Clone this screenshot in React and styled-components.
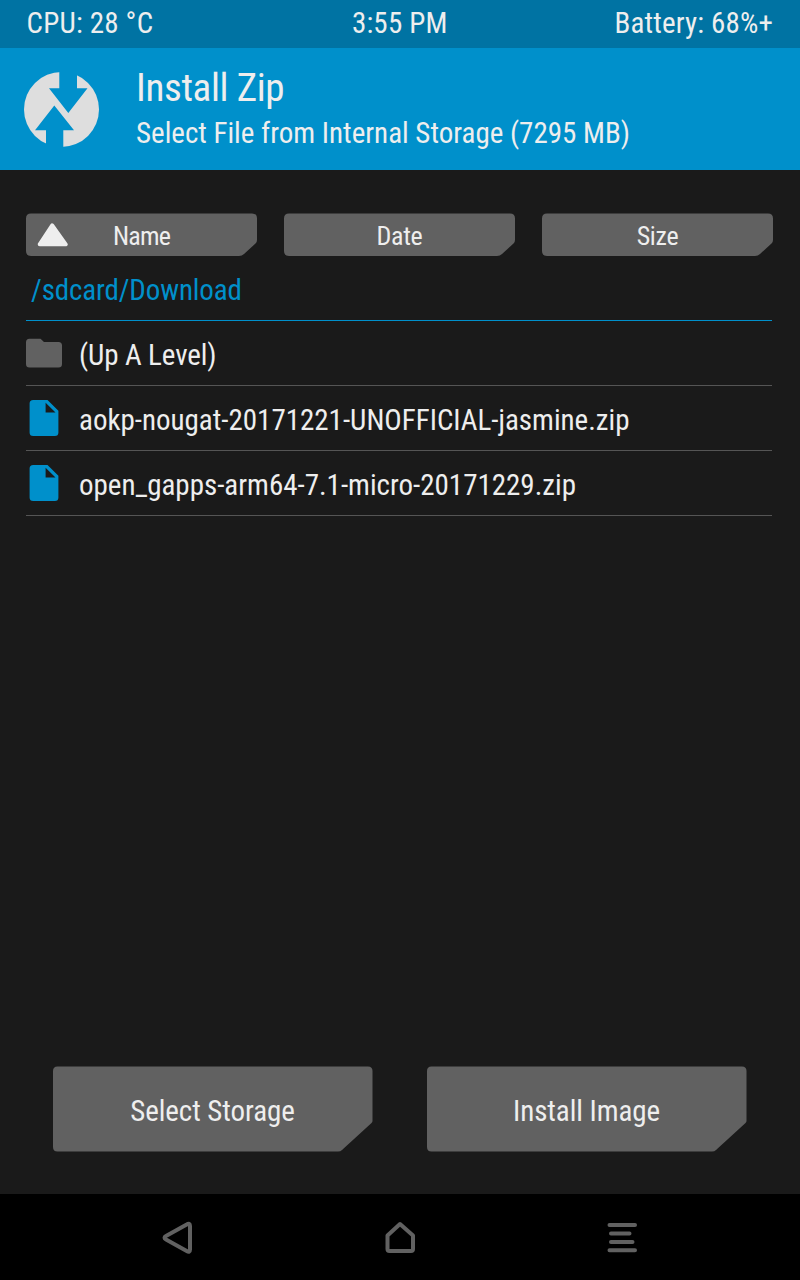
import React from "react";
import styled, { createGlobalStyle } from "styled-components";

const Global = createGlobalStyle`
  * { box-sizing: border-box; }
  body { margin: 0; background: #1a1a1a; }
`;

const Screen = styled.div`
  width: 800px;
  height: 1280px;
  display: flex;
  flex-direction: column;
  background: #1a1a1a;
  color: #eee;
  font-family: "Roboto Condensed", Roboto, sans-serif;
  font-stretch: 75%;
  font-weight: 400;
  font-size: 29px;
`;

const Label = styled.span`
  display: block;
  flex: none;
  white-space: nowrap;
  font-size: ${(p) => p.$size || 29}px;
  line-height: ${(p) => p.$line || 36}px;
  letter-spacing: ${(p) => p.$track || 0}px;
`;

const StatusBar = styled.header`
  height: 48px;
  padding: 5px 27px 0 26.5px;
  display: grid;
  grid-template-columns: 1fr auto 1fr;
  background: #0073a3;
`;

const StatusEnd = styled.div`
  display: flex;
  justify-content: flex-end;
`;

const TitleBar = styled.div`
  height: 122px;
  padding: 23px 24px 0;
  display: flex;
  gap: 36px;
  background: #0090cb;
`;

const TitleText = styled.div`
  display: flex;
  flex-direction: column;
  margin-top: -7px;
`;

const Content = styled.main`
  flex: 1;
  padding: 43px 27px 0 26px;
  display: flex;
  flex-direction: column;
`;

const SortRow = styled.div`
  display: flex;
  gap: 27px;
`;

const SortButton = styled.button`
  flex: none;
  width: 231px;
  height: 43px;
  padding: 3px 0 0;
  border: 0;
  display: grid;
  grid-template-columns: 54px 1fr 54px;
  justify-items: center;
  align-items: center;
  background: #616161;
  color: inherit;
  font: inherit;
  clip-path: path("M5 .5H226Q231 .5 231 5.5V27Q231 29 229.5 30.5L218 41Q216 43 213 43H5Q0 43 0 38V5.5Q0 .5 5 .5Z");
`;

const PathRow = styled.div`
  width: 746px;
  height: 65px;
  padding: 16px 0 0 5px;
  border-bottom: 1px solid #0090cb;
  color: #0090cb;
`;

const FileRow = styled.div`
  width: 746px;
  height: 65px;
  display: flex;
  align-items: center;
  gap: 17px;
  border-bottom: 1px solid #555;
  & > span { padding-top: 4px; }
`;

const Actions = styled.div`
  margin-top: auto;
  padding: 0 26px 42px 27px;
  display: flex;
  justify-content: space-between;
`;

const ActionButton = styled.button`
  width: 320px;
  height: 86px;
  padding: 4px 1px 0 0;
  border: 0;
  display: flex;
  justify-content: center;
  align-items: center;
  background: #616161;
  color: inherit;
  font: inherit;
  clip-path: path("M4.5 .5H315Q319.5 .5 319.5 5V55Q319.5 56 318.5 57L289 84Q287.500 85.500 285 85.500H4.500Q0 85.500 0 81V5Q0 .5 4.500 .5Z");
`;

const NavBar = styled.nav`
  height: 86px;
  padding: 26px 161px 0;
  display: flex;
  justify-content: space-between;
  background: #000;
`;

const NavIcon = styled.svg`
  width: 34px;
  height: 36px;
  fill: none;
  stroke: #616161;
  stroke-width: 4;
  stroke-linecap: round;
  stroke-linejoin: round;
`;

const Logo = () => (
  <svg width="76" height="78" viewBox="24 71 76 78">
    <mask id="arrows">
      <rect x="24" y="71" width="76" height="78" fill="#fff" />
      <path fill="#000" d="M59.300 70H77V88.300H87.500L68.300 113L49 88.300H59.300ZM54.300 105.500L74 130.300H63.300V150H46V130.300H35Z" />
    </mask>
    <circle cx="61.5" cy="109.400" r="37.5" fill="#dedede" mask="url(#arrows)" />
  </svg>
);

const FolderIcon = () => (
  <svg width="36" height="36" viewBox="0 0 36 36">
    <path fill="#616161" d="M3.500 3.700H14.500L18 7H32.500Q36 7 36 10.500V29Q36 32.500 32.500 32.500H3.500Q0 32.500 0 29V7.200Q0 3.700 3.500 3.700Z" />
  </svg>
);

const FileIcon = () => (
  <svg width="36" height="36" viewBox="0 0 36 36">
    <path fill="#0090cb" fillRule="evenodd" d="M7.200 0H21.500L32.400 10.800V32.500Q32.400 36 28.900 36H7.200Q3.600 36 3.600 32.500V3.500Q3.600 0 7.200 0ZM19.600 2.700V12.600H29.500Z" />
  </svg>
);

const SortArrow = () => (
  <svg width="32" height="26" viewBox="0 0 32 26">
    <path fill="#eee" stroke="#eee" strokeWidth="4" strokeLinejoin="round" d="M15.200 2.300L28.700 21.300H2.700Z" />
  </svg>
);

const files = [
  { name: "(Up A Level)", folder: true },
  { name: "aokp-nougat-20171221-UNOFFICIAL-jasmine.zip" },
  { name: "open_gapps-arm64-7.1-micro-20171229.zip" },
];

export default function App() {
  return (
    <Screen>
      <Global />
      <StatusBar>
        <Label $track={0.2}>CPU: 28 °C</Label>
        <Label $track={0.2}>3:55 PM</Label>
        <StatusEnd><Label $track={0.15}>Battery: 68%+</Label></StatusEnd>
      </StatusBar>
      <TitleBar>
        <Logo />
        <TitleText>
          <Label $size={39} $line={48} $track={-0.35}>Install Zip</Label>
          <Label $line={42}>Select File from Internal Storage (7295 MB)</Label>
        </TitleText>
      </TitleBar>
      <Content>
        <SortRow>
          <SortButton><SortArrow /><Label $size={26} $track={-0.8}>Name</Label></SortButton>
          <SortButton><i /><Label $size={26} $track={-0.3}>Date</Label></SortButton>
          <SortButton><i /><Label $size={26} $track={-0.3}>Size</Label></SortButton>
        </SortRow>
        <PathRow><Label $track={-0.13}>/sdcard/Download</Label></PathRow>
        {files.map((f) => (
          <FileRow key={f.name}>
            {f.folder ? <FolderIcon /> : <FileIcon />}
            <Label $track={f.folder ? -0.1 : -0.01}>{f.name}</Label>
          </FileRow>
        ))}
        <Actions>
          <ActionButton><Label $track={-0.06}>Select Storage</Label></ActionButton>
          <ActionButton><Label $track={-0.06}>Install Image</Label></ActionButton>
        </Actions>
      </Content>
      <NavBar>
        <NavIcon viewBox="161 1220 34 36"><path d="M186.700 1224.500Q190 1222.500 190 1226V1249.500Q190 1253 186.700 1251L166 1239.500Q163 1237.800 166 1236Z" /></NavIcon>
        <NavIcon viewBox="383 1220 34 36"><path d="M387.500 1235.500L400 1224L413 1235.500V1249Q413 1251 411 1251H389.500Q387.500 1251 387.500 1249Z" /></NavIcon>
        <NavIcon viewBox="605 1220 34 36"><path d="M609.500 1225H635M611 1233.500H629.500M611 1242H632.500M609.500 1250.300H635" /></NavIcon>
      </NavBar>
    </Screen>
  );
}
